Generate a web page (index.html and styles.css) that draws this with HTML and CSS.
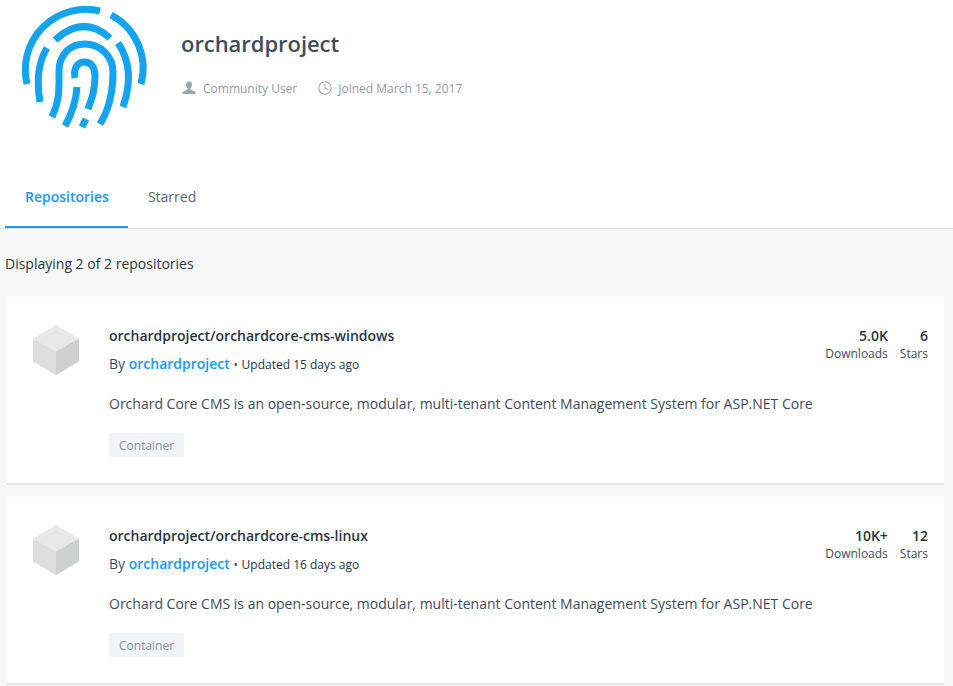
FILE: index.html
```html
<!DOCTYPE html>
<html lang="en">
<head>
<meta charset="utf-8">
<title>orchardproject</title>
<link rel="stylesheet" href="styles.css">
</head>
<body>
<header class="profile">
  <svg class="avatar" viewBox="0 0 170 140" width="170" height="140" fill="none" stroke="#14a3ee" stroke-width="7">
    <path d="M27 84A60.500 60.500 0 0 1 100 11"/>
    <path d="M111 15A60 60 0 0 1 141 84"/>
    <path d="M55 40Q83 14 110 38"/>
    <path d="M47 48C37 64 37 84 40 102"/>
    <path d="M118 43C131 62 131 84 123 107"/>
    <path d="M52 117C60 100 59 88 59 72C59 54 70 44 85 44C100 44 113 56 113 72C113 92 110 108 100 124"/>
    <path d="M65 126C73 112 76 100 77 87"/>
    <path d="M75 78C73 68 78 62 84 62C92 62 95 68 95 76C95 90 92 98 88 109"/>
    <path d="M82 127L86 119"/>
  </svg>
  <div class="identity">
    <h1 class="name">orchardproject</h1>
    <div class="meta">
      <span class="meta-item">
        <svg class="meta-icon" viewBox="0 0 14 14" width="14" height="14"><path fill="#9aa7b2" d="M7 0.500C5 .5 4 2 4 3.800 4 5.500 4.800 6.800 5.500 7.400V8.600L1.200 10.500C.6 10.800.5 11.400.5 13H13.500C13.500 11.400 13.400 10.800 12.800 10.500L8.500 8.600V7.400C9.200 6.800 10 5.500 10 3.800 10 2 9 .5 7 .5Z"/></svg>
        Community User
      </span>
      <span class="meta-item meta-joined">
        <svg class="meta-icon" viewBox="0 0 14 14" width="14" height="14" fill="none" stroke="#9aa7b2" stroke-width="1.100"><circle cx="7" cy="7" r="6.200"/><path d="M7 3V7.300L10 8.500"/></svg>
        Joined March 15, 2017
      </span>
    </div>
  </div>
</header>
<nav class="tabs">
  <a class="tab tab-active">Repositories</a>
  <a class="tab">Starred</a>
</nav>
<main class="content">
  <p class="count">Displaying 2 of 2 repositories</p>
  <article class="card">
    <svg class="cube" viewBox="0 0 48 50" width="48" height="50"><path fill="#e7e8e9" d="M24 0L47 13.500L24 26.500L1 13.500Z"/><path fill="#dcdedf" d="M1 13.500L24 26.500V50L1 36.500Z"/><path fill="#cdd0d1" d="M47 13.500L24 26.500V50L47 36.500Z"/></svg>
    <div class="info">
      <h2 class="repo">orchardproject/orchardcore-cms-windows</h2>
      <div class="by">By <a class="owner">orchardproject</a> <span class="dot">•</span> <span class="updated">Updated 15 days ago</span></div>
      <p class="desc">Orchard Core CMS is an open-source, modular, multi-tenant Content Management System for ASP.NET Core</p>
      <span class="chip">Container</span>
    </div>
    <div class="stats">
      <div class="stat"><strong>5.0K</strong><span>Downloads</span></div>
      <div class="stat"><strong>6</strong><span>Stars</span></div>
    </div>
  </article>
  <article class="card">
    <svg class="cube" viewBox="0 0 48 50" width="48" height="50"><path fill="#e7e8e9" d="M24 0L47 13.500L24 26.500L1 13.500Z"/><path fill="#dcdedf" d="M1 13.500L24 26.500V50L1 36.500Z"/><path fill="#cdd0d1" d="M47 13.500L24 26.500V50L47 36.500Z"/></svg>
    <div class="info">
      <h2 class="repo">orchardproject/orchardcore-cms-linux</h2>
      <div class="by">By <a class="owner">orchardproject</a> <span class="dot">•</span> <span class="updated">Updated 16 days ago</span></div>
      <p class="desc">Orchard Core CMS is an open-source, modular, multi-tenant Content Management System for ASP.NET Core</p>
      <span class="chip">Container</span>
    </div>
    <div class="stats">
      <div class="stat"><strong>10K+</strong><span>Downloads</span></div>
      <div class="stat"><strong>12</strong><span>Stars</span></div>
    </div>
  </article>
</main>
</body>
</html>
```
FILE: styles.css
```css
* { box-sizing: border-box; }
html, body { margin: 0; height: 100%; overflow: hidden; }
body { font-family: "Open Sans", sans-serif; background: #fff; color: #27343f; }
.profile { display: flex; height: 150px; align-items: flex-start; }
.avatar { flex: none; }
.identity { margin-left: 11px; padding-top: 28px; }
.name { margin: 0; font-size: 22px; line-height: 30px; font-weight: 600; color: #3d4c5b; letter-spacing: -0.05px; }
.meta { display: flex; margin-top: 22px; padding-left: 1px; font-size: 12px; line-height: 18px; color: #8f9ca8; }
.meta-item { display: flex; align-items: center; }
.meta-icon { margin-right: 7px; margin-top: -3px; }
.meta-joined .meta-icon { margin-right: 6px; }
.meta-joined { margin-left: 21px; }
.tabs { display: flex; height: 79px; padding-left: 5px; border-bottom: 1px solid #dfe2e4; }
.tab { display: flex; align-items: center; padding: 15px 20px 0; font-size: 14px; color: #5a6671; height: 78px; }
.tab-active { color: #2196f3; font-weight: 600; padding-right: 19px; box-shadow: inset 0 -2px 0 #2196f3; }
.content { background: #f7f7f7; padding: 0 9px 0 5px; height: 457px; }
.count { margin: 0; padding-top: 25px; font-size: 14px; line-height: 20px; height: 68px; color: #27343f; }
.card { display: flex; height: 188px; margin: 0 0 12px 1px; padding: 28px 16px 0 26px; background: #fff; border-bottom: 2px solid #e6e8ea; }
.cube { flex: none; margin-right: 29px; }
.info { flex: 1; }
.repo { margin: 0; font-size: 14px; line-height: 22px; font-weight: 600; color: #27343f; }
.by { margin-top: 6px; font-size: 14px; line-height: 22px; color: #3d4c5b; white-space: nowrap; }
.owner { color: #2196f3; font-weight: 600; }
.dot { font-size: 12px; }
.updated { font-size: 12px; color: #27343f; }
.desc { margin: 17px 0 0; font-size: 14px; line-height: 22px; color: #3d4c5b; white-space: nowrap; }
.chip { display: inline-block; margin-top: 18px; padding: 0 10px; height: 24px; line-height: 25px; font-size: 12px; color: #8492a0; background: #f1f4f7; border-radius: 2px; }
.stats { display: flex; gap: 12px; text-align: right; }
.stat { display: flex; flex-direction: column; }
.stat strong { font-size: 14px; line-height: 22px; font-weight: 600; color: #27343f; }
.stat span { font-size: 12px; line-height: 14px; color: #3d4c5b; }
```
